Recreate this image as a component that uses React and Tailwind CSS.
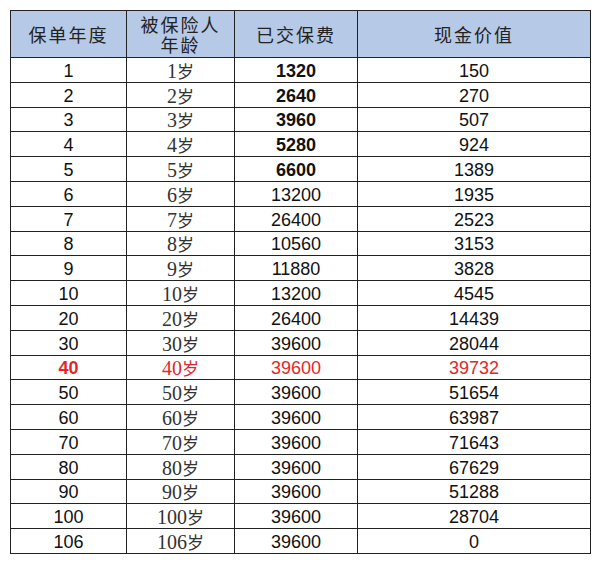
const rows = [
  { year: "1", age: "1", paid: "1320", cash: "150", boldPaid: true },
  { year: "2", age: "2", paid: "2640", cash: "270", boldPaid: true },
  { year: "3", age: "3", paid: "3960", cash: "507", boldPaid: true },
  { year: "4", age: "4", paid: "5280", cash: "924", boldPaid: true },
  { year: "5", age: "5", paid: "6600", cash: "1389", boldPaid: true },
  { year: "6", age: "6", paid: "13200", cash: "1935" },
  { year: "7", age: "7", paid: "26400", cash: "2523" },
  { year: "8", age: "8", paid: "10560", cash: "3153" },
  { year: "9", age: "9", paid: "11880", cash: "3828" },
  { year: "10", age: "10", paid: "13200", cash: "4545" },
  { year: "20", age: "20", paid: "26400", cash: "14439" },
  { year: "30", age: "30", paid: "39600", cash: "28044" },
  { year: "40", age: "40", paid: "39600", cash: "39732", red: true },
  { year: "50", age: "50", paid: "39600", cash: "51654" },
  { year: "60", age: "60", paid: "39600", cash: "63987" },
  { year: "70", age: "70", paid: "39600", cash: "71643" },
  { year: "80", age: "80", paid: "39600", cash: "67629" },
  { year: "90", age: "90", paid: "39600", cash: "51288" },
  { year: "100", age: "100", paid: "39600", cash: "28704" },
  { year: "106", age: "106", paid: "39600", cash: "0" },
];

const sans = "font-['Liberation_Sans',Arial,sans-serif]";
const serif = "font-['Liberation_Serif',serif]";
const cjk = "font-['Noto_Sans_CJK_SC',sans-serif]";

const App = () => {
  return (
    <div className="w-[600px] h-[563px] bg-white pt-[10px] pl-[10px]">
      <table className="w-[580px] table-fixed border-collapse text-[#111]">
        <colgroup>
          <col className="w-[116px]" />
          <col className="w-[108px]" />
          <col className="w-[123px]" />
          <col className="w-[233px]" />
        </colgroup>
        <thead>
          {/* header row */}
          <tr className={`h-[47px] bg-[#b6c9e7] ${cjk} text-[18px] tracking-[2px] text-[#222]`}>
            <th className="border border-[#222] font-normal p-0">保单年度</th>
            <th className="border border-[#222] font-normal p-0 leading-[20px]">
              <div>被保险人</div>
              <div>年龄</div>
            </th>
            <th className="border border-[#222] font-normal p-0">已交保费</th>
            <th className="border border-[#222] font-normal p-0">现金价值</th>
          </tr>
        </thead>
        <tbody>
          {rows.map((r, i) => (
            <tr key={i} className={`h-[24.8px] ${r.red ? "text-[#e2262a]" : ""}`}>
              <td className={`border border-[#222] p-0 pt-[2px] text-center text-[18px] leading-none ${sans} ${r.red ? "font-bold" : ""}`}>
                {r.year}
              </td>
              <td className={`border border-[#222] p-0 pt-[2px] text-center leading-none ${r.red ? "" : "text-[#333]"}`}>
                <span className={`${serif} text-[20px]`}>{r.age}</span>
                <span className={`${cjk} text-[17px]`}>岁</span>
              </td>
              <td className={`border border-[#222] p-0 pt-[2px] text-center text-[18px] leading-none ${sans} ${r.boldPaid ? "font-bold" : ""}`}>
                {r.paid}
              </td>
              <td className={`border border-[#222] p-0 pt-[2px] text-center text-[18px] leading-none ${sans}`}>
                {r.cash}
              </td>
            </tr>
          ))}
        </tbody>
      </table>
    </div>
  );
};

export default App;
